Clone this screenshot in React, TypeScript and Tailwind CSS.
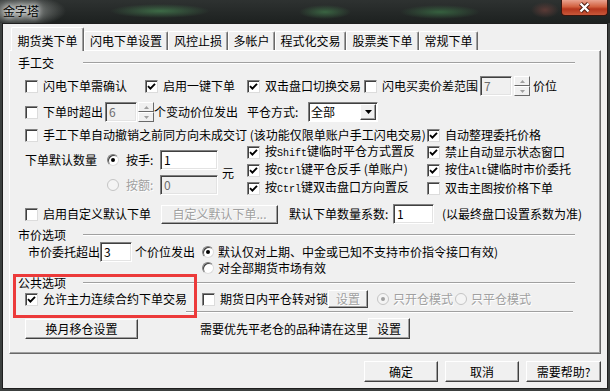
import React from "react";

function Box({ on }: { on?: boolean }) {
  return (
    <span className="flex h-[13px] w-[13px] shrink-0 items-center justify-center border border-t-[#808080] border-l-[#808080] border-r-[#dcdcdc] border-b-[#dcdcdc] bg-white shadow-[inset_1px_1px_0_#404040]">
      {on && (
        <svg width="9" height="9" viewBox="0 0 9 9">
          <path d="M1 4.2l2.4 2.4L8 1.8" fill="none" stroke="#000" strokeWidth="1.9" />
        </svg>
      )}
    </span>
  );
}

function Dot({ on, off }: { on?: boolean; off?: boolean }) {
  return (
    <span
      className={`flex h-[12px] w-[12px] shrink-0 items-center justify-center rounded-full border ${
        off
          ? "border-[#c4c4c4] bg-[#f4f4f4]"
          : "border-t-[#808080] border-l-[#808080] border-r-[#dcdcdc] border-b-[#dcdcdc] bg-white shadow-[inset_1px_1px_0_#404040]"
      }`}
    >
      {on && <span className={`h-[4px] w-[4px] rounded-full ${off ? "bg-[#a0a0a0]" : "bg-black"}`} />}
    </span>
  );
}

function CheckItem({ on, children, className = "" }: { on?: boolean; children: React.ReactNode; className?: string }) {
  return (
    <span className={`flex shrink-0 items-center gap-[5px] whitespace-nowrap ${className}`}>
      <Box on={on} />
      <span>{children}</span>
    </span>
  );
}

function RadioItem({ on, off, children, className = "" }: { on?: boolean; off?: boolean; children: React.ReactNode; className?: string }) {
  return (
    <span className={`flex shrink-0 items-center gap-[4px] whitespace-nowrap ${className}`}>
      <Dot on={on} off={off} />
      <span className={off ? "text-[#a0a0a0] [text-shadow:1px_1px_0_#fff]" : ""}>{children}</span>
    </span>
  );
}

function Field({ v, off, className = "" }: { v: string; off?: boolean; className?: string }) {
  return (
    <span
      className={`flex h-[20px] shrink-0 items-center border border-t-[#808080] border-l-[#808080] border-r-white border-b-white pl-[3px] shadow-[inset_1px_1px_0_#404040,inset_-1px_-1px_0_#e3e3e3] ${
        off ? "bg-[#f0f0f0] text-[#6d6d6d]" : "bg-white text-black"
      } ${className}`}
    >
      {v}
    </span>
  );
}

function Btn({ children, off, className = "" }: { children: React.ReactNode; off?: boolean; className?: string }) {
  return (
    <span
      className={`flex shrink-0 items-center justify-center whitespace-nowrap border border-t-white border-l-white border-r-[#404040] border-b-[#404040] bg-[#f0f0f0] shadow-[inset_-1px_-1px_0_#a0a0a0] ${
        off ? "text-[#a0a0a0] [text-shadow:1px_1px_0_#fff]" : "text-black"
      } ${className}`}
    >
      {children}
    </span>
  );
}

function Arrow({ up }: { up?: boolean }) {
  return (
    <span className="flex h-[10px] w-full items-center justify-center border border-t-white border-l-white border-r-[#696969] border-b-[#696969] bg-[#f0f0f0]">
      <svg width="5" height="3" viewBox="0 0 5 3">
        <path d={up ? "M0 3L2.5 0L5 3Z" : "M0 0L5 0L2.5 3Z"} fill="#a0a0a0" />
      </svg>
    </span>
  );
}

function Spin({ className = "" }: { className?: string }) {
  return (
    <span className={`flex h-[20px] w-[16px] shrink-0 flex-col ${className}`}>
      <Arrow up />
      <Arrow />
    </span>
  );
}

function Mono({ children }: { children: React.ReactNode }) {
  return <span className="font-['Liberation_Mono',monospace] text-[10px]">{children}</span>;
}

function Group({ title, className = "" }: { title: string; className?: string }) {
  return (
    <div className={`flex h-[14px] items-center ${className}`}>
      <span className="ml-[8px] w-[65px] shrink-0">{title}</span>
      <span className="h-[2px] w-[492px] border-t border-b border-t-[#a0a0a0] border-b-white" />
    </div>
  );
}

const tabs = [
  { label: "闪电下单设置", w: "w-[84px]" },
  { label: "风控止损", w: "w-[60px]" },
  { label: "多帐户", w: "w-[47px]" },
  { label: "程式化交易", w: "w-[71px]" },
  { label: "股票类下单", w: "w-[73px]" },
  { label: "常规下单", w: "w-[59px]" },
];

export default function App() {
  return (
    <div className="flex h-[391px] w-[610px] flex-col overflow-hidden bg-[#3c403f] font-['Noto_Sans_CJK_SC',sans-serif] text-[12px] leading-[12px] text-black">
      {/* title bar */}
      <div className="flex h-[23px] shrink-0 items-start justify-between bg-[radial-gradient(46px_16px_at_20px_11px,#9a9e9b,transparent),radial-gradient(50px_7px_at_160px_11px,#3d6a46,transparent),radial-gradient(26px_7px_at_325px_12px,#3a6442,transparent),radial-gradient(40px_7px_at_440px_12px,#36603f,transparent),radial-gradient(14px_8px_at_545px_10px,#5a3a36,transparent),linear-gradient(#2e3231,#1d2120)]">
        <span className="ml-[3px] mt-[5px] [text-shadow:0_0_5px_#fff,0_0_9px_#fff]">金字塔</span>
        <span className="mr-[2px] flex h-[16px] w-[47px] items-center justify-center rounded-b-[4px] border border-t-0 border-[#3a1710] bg-[linear-gradient(#e9a390,#d2603f_45%,#b5361d_60%,#c9583a)]">
          <svg width="13" height="11" viewBox="0 0 13 11">
            <path d="M2.5 1.5L10.5 9.5M10.5 1.5L2.5 9.5" stroke="#4a1a10" strokeWidth="4.2" />
            <path d="M2.5 1.5L10.5 9.5M10.5 1.5L2.5 9.5" stroke="#fff" strokeWidth="2.4" />
          </svg>
        </span>
      </div>

      {/* client area */}
      <div className="ml-[2px] flex h-[366px] w-[606px] flex-col border border-[#1e1e1e] bg-[#f0f0f0]">
        <div className="ml-[8px] mt-[3px] flex h-[23px] items-start">
          <div className="relative z-10 flex h-[24px] w-[73px] justify-center rounded-t-[2px] border-t border-l border-r border-t-white border-l-white border-r-[#696969] bg-[#f0f0f0] pt-[7px] shadow-[inset_-1px_0_0_#a0a0a0]">
            期货类下单
          </div>
          {tabs.map((t) => (
            <div
              key={t.label}
              className={`mt-[4px] flex h-[19px] items-center justify-center rounded-t-[2px] border-t border-l border-r border-t-white border-l-white border-r-[#696969] shadow-[inset_-1px_0_0_#a0a0a0] ${t.w}`}
            >
              {t.label}
            </div>
          ))}
        </div>

        {/* tab panel */}
        <div className="relative ml-[6px] flex h-[304px] w-[592px] flex-col border border-t-white border-l-white border-r-[#696969] border-b-[#696969] shadow-[inset_-1px_-1px_0_#a0a0a0]">
          <Group title="手工交" className="mt-[5px]" />

          <div className="mt-[6px] flex h-[20px] items-center">
            <CheckItem className="ml-[15px] w-[120px]">闪电下单需确认</CheckItem>
            <CheckItem on className="w-[102px]">启用一键下单</CheckItem>
            <CheckItem on className="w-[117px]">双击盘口切换交易</CheckItem>
            <CheckItem className="w-[116px]">闪电买卖价差范围</CheckItem>
            <Field v="7" off className="w-[32px]" />
            <Spin className="ml-[2px]" />
            <span className="ml-[3px]">价位</span>
          </div>

          <div className="mt-[6px] flex h-[20px] items-center">
            <CheckItem className="ml-[15px] w-[80px]">下单时超出</CheckItem>
            <Field v="6" off className="w-[32px]" />
            <Spin className="ml-[1px]" />
            <span className="w-[93px] whitespace-nowrap">个变动价位发出</span>
            <span className="w-[61px] whitespace-nowrap">平仓方式:</span>
            <span className="flex h-[20px] w-[70px] items-center justify-between border border-t-[#808080] border-l-[#808080] border-r-white border-b-white bg-white pl-[2px] pr-[1px] shadow-[inset_1px_1px_0_#404040]">
              <span>全部</span>
              <span className="flex h-[16px] w-[16px] items-center justify-center border border-t-white border-l-white border-r-[#404040] border-b-[#404040] bg-[#f0f0f0] shadow-[inset_-1px_-1px_0_#a0a0a0]">
                <svg width="7" height="4" viewBox="0 0 7 4">
                  <path d="M0 0L7 0L3.5 4Z" fill="#000" />
                </svg>
              </span>
            </span>
          </div>

          <div className="mt-[6px] flex h-[14px] items-center">
            <CheckItem className="ml-[15px] w-[402px]">
              手工下单自动撤销之前同方向未成交订 (该功能仅限单账户手工闪电交易)
            </CheckItem>
            <CheckItem on>自动整理委托价格</CheckItem>
          </div>

          <div className="mt-[1px] flex h-[54px]">
            <div className="ml-[15px] w-[82px] shrink-0 whitespace-nowrap pt-[11px]">下单默认数量</div>
            <div className="flex w-[115px] shrink-0 flex-col gap-[5px] pt-[7px]">
              <div className="flex h-[20px] items-center">
                <Dot on />
                <span className="ml-[7px] w-[34px]">按手:</span>
                <Field v="1" className="w-[58px]" />
              </div>
              <div className="flex h-[20px] items-center">
                <Dot off />
                <span className="ml-[7px] w-[34px] text-[#a0a0a0] [text-shadow:1px_1px_0_#fff]">按额:</span>
                <Field v="0" off className="w-[58px]" />
              </div>
            </div>
            <div className="w-[25px] shrink-0 pt-[24px]">元</div>
            <div className="flex w-[180px] shrink-0 flex-col">
              <div className="flex h-[18px] items-center">
                <CheckItem on>
                  按<Mono>Shift</Mono>键临时平仓方式置反
                </CheckItem>
              </div>
              <div className="flex h-[18px] items-center">
                <CheckItem on>
                  按<Mono>Ctrl</Mono>键平仓反手 (单账户)
                </CheckItem>
              </div>
              <div className="flex h-[18px] items-center">
                <CheckItem on>
                  按<Mono>Ctrl</Mono>键双击盘口方向置反
                </CheckItem>
              </div>
            </div>
            <div className="flex flex-col">
              <div className="flex h-[18px] items-center">
                <CheckItem on>禁止自动显示状态窗口</CheckItem>
              </div>
              <div className="flex h-[18px] items-center">
                <CheckItem on>
                  按住<Mono>Alt</Mono>键临时市价委托
                </CheckItem>
              </div>
              <div className="flex h-[18px] items-center">
                <CheckItem>双击主图按价格下单</CheckItem>
              </div>
            </div>
          </div>

          <div className="mt-[7px] flex h-[20px] items-center">
            <CheckItem className="ml-[15px] w-[136px]">启用自定义默认下单</CheckItem>
            <Btn off className="h-[19px] w-[117px]">
              自定义默认下单...
            </Btn>
            <span className="ml-[11px] w-[104px] whitespace-nowrap">默认下单数量系数:</span>
            <Field v="1" className="w-[41px]" />
            <span className="ml-[8px] whitespace-nowrap">(以最终盘口设置系数为准)</span>
          </div>

          <Group title="市价选项" className="mt-[4px]" />

          <div className="flex h-[20px] items-center">
            <span className="ml-[18px] w-[72px] whitespace-nowrap">市价委托超出</span>
            <Field v="3" className="w-[32px]" />
            <span className="ml-[3px] w-[67px] whitespace-nowrap">个价位发出</span>
            <RadioItem on>默认仅对上期、中金或已知不支持市价指令接口有效)</RadioItem>
          </div>
          <div className="flex h-[11px] items-center">
            <RadioItem className="ml-[192px]">对全部期货市场有效</RadioItem>
          </div>

          <Group title="公共选项" className="mt-[3px]" />

          <div className="flex h-[18px] items-center">
            <CheckItem on className="ml-[15px] w-[177px]">允许主力连续合约下单交易</CheckItem>
            <CheckItem className="w-[126px]">期货日内平仓转对锁</CheckItem>
            <Btn off className="h-[18px] w-[40px]">
              设置
            </Btn>
            <RadioItem on off className="ml-[9px] w-[78px]">
              只开仓模式
            </RadioItem>
            <RadioItem off>只平仓模式</RadioItem>
          </div>

          <div className="ml-[176px] mt-[3px] h-[2px] w-[387px] border-t border-b border-t-[#a0a0a0] border-b-white" />

          <div className="mt-[5px] flex h-[21px] items-center">
            <Btn className="ml-[15px] h-[20px] w-[113px]">换月移仓设置</Btn>
            <span className="ml-[62px] whitespace-nowrap">需要优先平老仓的品种请在这里</span>
            <Btn className="h-[21px] w-[42px]">设置</Btn>
          </div>

          {/* annotation box */}
          <div className="absolute left-[3px] top-[223px] h-[44px] w-[184px] border-[3px] border-[#ec3a3a]" />
        </div>

        <div className="mt-[7px] flex justify-end gap-[7px] pr-[6px]">
          <Btn className="h-[21px] w-[74px]">确定</Btn>
          <Btn className="h-[21px] w-[74px]">取消</Btn>
          <Btn className="h-[21px] w-[75px]">需要帮助?</Btn>
        </div>
      </div>
    </div>
  );
}
